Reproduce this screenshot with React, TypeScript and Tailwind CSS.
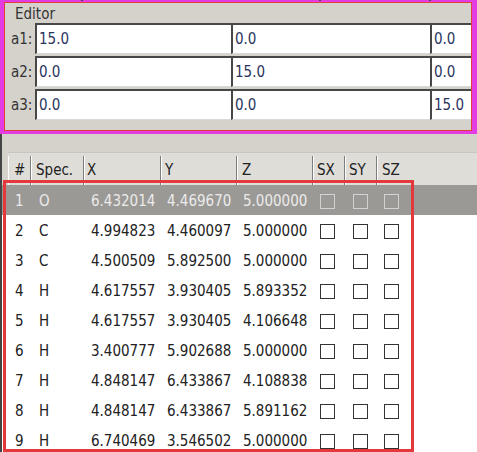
import React from "react";

const vecs = [
  { label: "a1:", v: ["15.0", "0.0", "0.0"] },
  { label: "a2:", v: ["0.0", "15.0", "0.0"] },
  { label: "a3:", v: ["0.0", "0.0", "15.0"] },
];

const rows = [
  ["1", "O", "6.432014", "4.469670", "5.000000"],
  ["2", "C", "4.994823", "4.460097", "5.000000"],
  ["3", "C", "4.500509", "5.892500", "5.000000"],
  ["4", "H", "4.617557", "3.930405", "5.893352"],
  ["5", "H", "4.617557", "3.930405", "4.106648"],
  ["6", "H", "3.400777", "5.902688", "5.000000"],
  ["7", "H", "4.848147", "6.433867", "4.108838"],
  ["8", "H", "4.848147", "6.433867", "5.891162"],
  ["9", "H", "6.740469", "3.546502", "5.000000"],
];

function Check({ sel }: { sel: boolean }) {
  return (
    <div
      className={
        sel
          ? "w-[15px] h-[15px] border border-[#d2d2d2]"
          : "w-[15px] h-[15px] border border-[#333] bg-white"
      }
    />
  );
}

export default function App() {
  return (
    <div className="relative w-[477px] h-[452px] overflow-hidden bg-[#d5d2cc] flex flex-col font-['DejaVu_Sans_Condensed','Noto_Sans',sans-serif] text-[15px] leading-none text-[#222]">
      {/* Editor group */}
      <div className="h-[134px] shrink-0 border-l-4 border-t-2 border-r-[5px] border-b-[3px] border-[#e23ce2]">
        <div className="h-full border border-[#e0403c] flex flex-col overflow-hidden">
          <div className="h-[20px] shrink-0 flex items-center pl-[10px] pt-[2px] text-[#333]">Editor</div>
          <div className="flex flex-col gap-[2px]">
            {vecs.map((r) => (
              <div key={r.label} className="flex h-[31px]">
                <div className="w-[30px] shrink-0 pl-[6px] pt-[2px] flex items-center text-[#333]">{r.label}</div>
                <div className="w-[196px] shrink-0 bg-white border-t-2 border-l-2 border-b border-[#474747] border-b-[#d9d9d9] flex items-center pl-[2px] pt-[1px] text-[#2a3560]">
                  {r.v[0]}
                </div>
                <div className="w-[199px] shrink-0 bg-white border-t-2 border-l-2 border-b border-[#474747] border-b-[#d9d9d9] flex items-center pl-[2px] pt-[1px] text-[#2a3560]">
                  {r.v[1]}
                </div>
                <div className="w-[80px] shrink-0 bg-white border-t-2 border-l-2 border-b border-[#474747] border-b-[#d9d9d9] flex items-center pl-[2px] pt-[1px] text-[#2a3560]">
                  {r.v[2]}
                </div>
              </div>
            ))}
          </div>
        </div>
      </div>

      {/* Table */}
      <div className="flex-1 flex flex-col border-l-2 border-[#444] min-h-0">
        <div className="h-[18px] shrink-0" />
        <div className="h-[33px] shrink-0 flex pl-[6px]">
          <div className="flex flex-1 bg-[#dfddd8] border-t border-[#c9c6c0] pt-[3px]">
            <div className="w-[23px] shrink-0 border-l border-white border-r border-r-[#7d7d7d] flex items-center pl-[5px]">#</div>
            <div className="w-[53px] shrink-0 border-l border-white border-r border-r-[#7d7d7d] flex items-center pl-[4px]">Spec.</div>
            <div className="w-[77px] shrink-0 border-l border-white border-r border-r-[#7d7d7d] flex items-center pl-[2px]">X</div>
            <div className="w-[76px] shrink-0 border-l border-white border-r border-r-[#7d7d7d] flex items-center pl-[3px]">Y</div>
            <div className="w-[76px] shrink-0 border-l border-white border-r border-r-[#7d7d7d] flex items-center pl-[4px]">Z</div>
            <div className="w-[32px] shrink-0 border-l border-white border-r border-r-[#7d7d7d] flex items-center pl-[3px]">SX</div>
            <div className="w-[32px] shrink-0 border-l border-white border-r border-r-[#7d7d7d] flex items-center pl-[3px]">SY</div>
            <div className="flex-1 border-l border-white flex items-center pl-[4px]">SZ</div>
          </div>
        </div>
        <div className="flex-1 bg-white flex flex-col overflow-hidden">
          {rows.map((r, i) => {
            const sel = i === 0;
            return (
              <div
                key={r[0]}
                className={
                  sel
                    ? "h-[30px] shrink-0 flex items-center pt-[3px] bg-[#9b9995] text-[#ebebeb]"
                    : "h-[30px] shrink-0 flex items-center pt-[3px]"
                }
              >
                <div className="w-[31px] shrink-0 pl-[13px]">{r[0]}</div>
                <div className="w-[53px] shrink-0 pl-[6px]">{r[1]}</div>
                <div className="w-[77px] shrink-0 pl-[5px]">{r[2]}</div>
                <div className="w-[76px] shrink-0 pl-[4px]">{r[3]}</div>
                <div className="w-[76px] shrink-0 pl-[4px]">{r[4]}</div>
                <div className="w-[32px] shrink-0 pl-[5px]"><Check sel={sel} /></div>
                <div className="w-[32px] shrink-0 pl-[6px]"><Check sel={sel} /></div>
                <div className="w-[32px] shrink-0 pl-[5px]"><Check sel={sel} /></div>
              </div>
            );
          })}
        </div>
      </div>

      {/* annotation overlays */}
      <div className="absolute left-[3px] top-[180px] w-[411px] h-[272px] border-[3px] border-[#e3393c]" />
      <div className="absolute left-[81px] top-0 w-[2px] h-px bg-[#444]" />
      <div className="absolute left-[319px] top-0 w-[2px] h-px bg-[#444]" />
      <div className="absolute left-[429px] top-0 w-[2px] h-px bg-[#444]" />
    </div>
  );
}
